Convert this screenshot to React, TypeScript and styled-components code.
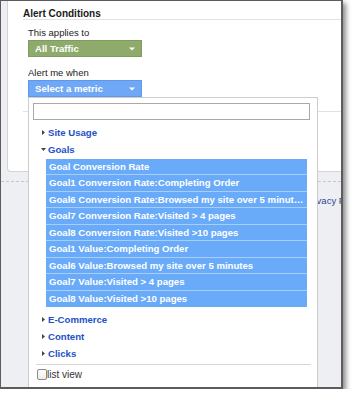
import React from 'react'
import styled, { createGlobalStyle } from 'styled-components'

const GlobalStyle = createGlobalStyle`
  html, body {
    margin: 0;
    padding: 0;
    background: #ffffff;
  }
  body {
    font-family: "Liberation Sans", Arial, sans-serif;
    color: #222;
  }
`

const goalItems = [
    'Goal Conversion Rate',
    'Goal1 Conversion Rate:Completing Order',
    'Goal6 Conversion Rate:Browsed my site over 5 minutes',
    'Goal7 Conversion Rate:Visited > 4 pages',
    'Goal8 Conversion Rate:Visited >10 pages',
    'Goal1 Value:Completing Order',
    'Goal6 Value:Browsed my site over 5 minutes',
    'Goal7 Value:Visited > 4 pages',
    'Goal8 Value:Visited >10 pages',
]

const Caret = ({ open }: { open?: boolean }) => (
    <CaretIcon width="5" height="5" viewBox="0 0 5 5">
        {open
            ? <polygon points="0,1 5,1 2.5,4" fill="#444" />
            : <polygon points="1,0 4,2.5 1,5" fill="#444" />}
    </CaretIcon>
)

const SelectArrow = () => (
    <ArrowIcon width="6" height="4" viewBox="0 0 6 4">
        <polygon points="0,0.5 6,0.5 3,3.5" fill="#fff" />
    </ArrowIcon>
)

const App = () => {
    return (
        <>
            <GlobalStyle />
            <Frame>
                <Card>
                    <SectionTitle>Alert Conditions</SectionTitle>
                    <Body>
                        <Label>This applies to</Label>
                        <SelectButton tone="green">
                            <span>All Traffic</span>
                            <SelectArrow />
                        </SelectButton>
                        <Label style={{ marginTop: 10 }}>Alert me when</Label>
                        <SelectWrap>
                            <SelectButton tone="blue">
                                <span>Select a metric</span>
                                <SelectArrow />
                            </SelectButton>
                            <Panel>
                                <Search type="text" />
                                <Tree>
                                    <Category><Caret />Site Usage</Category>
                                    <Category><Caret open />Goals</Category>
                                    <Items>
                                        {goalItems.map((g) => (
                                            <Item key={g}>{g}</Item>
                                        ))}
                                    </Items>
                                    <Category><Caret />E-Commerce</Category>
                                    <Category><Caret />Content</Category>
                                    <Category><Caret />Clicks</Category>
                                </Tree>
                                <PanelFooter>
                                    <CheckBox />
                                    <span>list view</span>
                                </PanelFooter>
                            </Panel>
                        </SelectWrap>
                    </Body>
                    <Divider />
                </Card>
                <PageFooter>
                    <FooterLink>Privacy Policy</FooterLink>
                </PageFooter>
            </Frame>
        </>
    )
}

const Frame = styled.div`
    position: relative;
    box-sizing: border-box;
    width: 343px;
    height: 389px;
    border: 1px solid #5c5c5c;
    border-right-width: 2px;
    border-bottom-width: 2px;
    background: #eeeff3;
    box-shadow: 3px 3px 5px rgba(0, 0, 0, 0.45);
    overflow: hidden;
`

const Card = styled.div`
    box-sizing: border-box;
    height: 171px;
    margin-left: 6px;
    margin-right: -20px;
    background: #fff;
    border-left: 1px solid #d4d4d8;
    border-bottom: 1px solid #d4d4d8;
    border-bottom-left-radius: 4px;
    padding-top: 7px;
`

const SectionTitle = styled.div`
    margin-left: 15px;
    font-size: 10px;
    font-weight: bold;
    line-height: 11px;
    color: #1a1a1a;
    border-bottom: 1px solid #e2e2e2;
`

const Body = styled.div`
    padding-left: 20px;
    padding-top: 7px;
`

const Label = styled.div`
    font-size: 9.5px;
    line-height: 12px;
    color: #222;
    margin-bottom: 1px;
`

const SelectWrap = styled.div`
    position: relative;
    width: 114px;
`

const SelectButton = styled.div<{ tone: 'green' | 'blue' }>`
    box-sizing: border-box;
    width: 114px;
    height: 17px;
    display: flex;
    align-items: center;
    justify-content: space-between;
    padding: 0 6px 0 6px;
    background: ${(p) => (p.tone === 'green' ? '#8eab6b' : '#6fa8f6')};
    border: 1px solid ${(p) => (p.tone === 'green' ? '#7f9c5d' : '#5f98e8')};
    color: #fff;
    font-size: 9.6px;
    font-weight: bold;
`

const ArrowIcon = styled.svg`
    display: block;
`

const Panel = styled.div`
    position: absolute;
    top: 100%;
    left: 0;
    box-sizing: border-box;
    width: 290px;
    background: #fff;
    border: 1px solid #cdcdcd;
    padding: 5px 0 10px 0;
    z-index: 5;
`

const Search = styled.input`
    display: block;
    box-sizing: border-box;
    width: 277px;
    height: 17px;
    margin: 0 0 0 4px;
    padding: 0;
    border: 1px solid #a9a9a9;
    outline: none;
`

const Tree = styled.div`
    padding-top: 4px;
`

const Category = styled.div`
    display: flex;
    align-items: center;
    height: 17px;
    padding-left: 12px;
    font-size: 9.6px;
    font-weight: bold;
    color: #2251c6;
`

const CaretIcon = styled.svg`
    display: block;
    margin-right: 2px;
`

const Items = styled.div`
    margin-left: 17px;
    width: 261px;
    padding-top: 1px;
    margin-bottom: 4px;
`

const Item = styled.div`
    box-sizing: border-box;
    height: 16.45px;
    line-height: 15.5px;
    padding: 0 3px 0 3px;
    background: #6aabf9;
    border-bottom: 1px solid #a7cdfb;
    color: #fff;
    font-size: 9.6px;
    font-weight: bold;
    white-space: nowrap;
    overflow: hidden;
    text-overflow: ellipsis;

    &:last-child {
        border-bottom: none;
    }
`

const PanelFooter = styled.div`
    display: flex;
    align-items: center;
    margin: 2px 6px 0 7px;
    padding-top: 4px;
    border-top: 1px solid #d6d6d6;
    font-size: 10px;
    color: #333;
`

const CheckBox = styled.span`
    display: inline-block;
    box-sizing: border-box;
    width: 10px;
    height: 11px;
    margin-left: 1px;
    border: 1px solid #8a8a8a;
    border-radius: 2px;
    background: linear-gradient(#fff, #ececec);
`

const Divider = styled.div`
    margin-left: 15px;
    margin-top: 14px;
    border-bottom: 1px solid #e2e2e2;
`

const PageFooter = styled.div`
    margin-top: 9px;
    border-top: 1px dashed #c8c8cc;
    padding-top: 8px;
    padding-left: 304px;
    white-space: nowrap;
`

const FooterLink = styled.span`
    font-size: 9.5px;
    line-height: 12px;
    color: #34478c;
`

export default App
